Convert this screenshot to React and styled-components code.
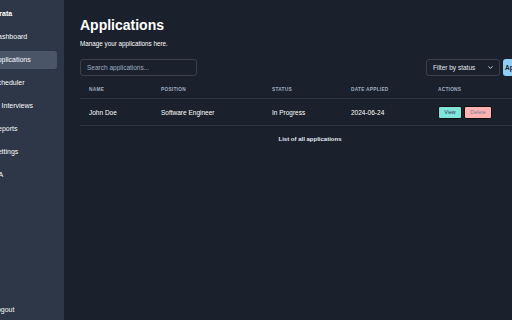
import React from 'react';
import styled, { createGlobalStyle } from 'styled-components';
import { ChevronDown } from 'lucide-react';

const GlobalStyle = createGlobalStyle`
  html, body {
    margin: 0;
    padding: 0;
    background: #1a202c;
    font-family: "Liberation Sans", Arial, sans-serif;
    color: #e2e8f0;
  }
`;

const Layout = styled.div`
  display: flex;
  width: 512px;
  height: 320px;
  overflow: hidden;
`;

const Sidebar = styled.aside`
  flex: 0 0 64px;
  display: flex;
  flex-direction: column;
  background: #2d3748;
  padding: 9px 7px 1px 0;
  box-sizing: border-box;
  overflow: hidden;
`;

const Brand = styled.div`
  margin-left: -20px;
  padding-left: 10px;
  height: 10px;
  line-height: 10px;
  font-size: 7px;
  font-weight: 700;
  color: #fff;
  white-space: nowrap;
  margin-bottom: 9px;
`;

const Nav = styled.nav`
  display: flex;
  flex-direction: column;
  gap: 5px;
`;

const NavItem = styled.div`
  margin-left: -20px;
  padding-left: 13px;
  height: 18px;
  line-height: 18px;
  font-size: 7px;
  color: #f7fafc;
  white-space: nowrap;
  border-radius: 3px;
  background: ${(p) => (p.$active ? '#4a5568' : 'transparent')};
`;

const Bottom = styled(NavItem)`
  margin-top: auto;
`;

const Main = styled.main`
  flex: 1;
  padding: 16px 0 0 16px;
  overflow: hidden;
`;

const Content = styled.div`
  width: 460px;
`;

const Title = styled.h1`
  margin: 0;
  font-size: 14px;
  line-height: 18px;
  font-weight: 700;
  color: #fff;
`;

const Subtitle = styled.p`
  margin: 5px 0 0;
  font-size: 6.3px;
  line-height: 10px;
  color: #fff;
`;

const Toolbar = styled.div`
  display: flex;
  justify-content: space-between;
  align-items: center;
  margin-top: 10px;
`;

const Search = styled.input`
  width: 117px;
  height: 17px;
  box-sizing: border-box;
  background: transparent;
  border: 1px solid rgba(255, 255, 255, 0.14);
  border-radius: 3px;
  padding: 0 6px;
  font-family: inherit;
  font-size: 6.5px;
  color: #e2e8f0;
  outline: none;
  &::placeholder {
    color: #a0aec0;
  }
`;

const Right = styled.div`
  display: flex;
  gap: 3px;
`;

const Select = styled.div`
  width: 74px;
  height: 17px;
  box-sizing: border-box;
  border: 1px solid rgba(255, 255, 255, 0.14);
  border-radius: 3px;
  display: flex;
  align-items: center;
  justify-content: space-between;
  padding: 0 5px 0 6px;
  font-size: 6.5px;
  color: #e2e8f0;
`;

const AddButton = styled.button`
  width: 37px;
  height: 17px;
  border: none;
  border-radius: 3px;
  background: #90cdf4;
  color: #1a202c;
  font-family: inherit;
  font-size: 6.5px;
  font-weight: 700;
  padding: 0 2px;
  white-space: nowrap;
  overflow: hidden;
  text-align: left;
`;

const Table = styled.table`
  width: 460px;
  margin-top: 6px;
  border-collapse: collapse;
  table-layout: fixed;
`;

const Th = styled.th`
  box-sizing: border-box;
  width: ${(p) => p.$w}px;
  height: 16px;
  padding: 0 0 0 9px;
  text-align: left;
  font-size: 4.8px;
  font-weight: 700;
  letter-spacing: 0.05em;
  text-transform: uppercase;
  color: #a0aec0;
  border-bottom: 1px solid #2d3748;
`;

const Td = styled.td`
  height: 25px;
  padding: 1px 0 0 9px;
  font-size: 6.5px;
  color: #fff;
  border-bottom: 1px solid #2d3748;
`;

const Caption = styled.caption`
  caption-side: bottom;
  padding-top: 9px;
  font-size: 6px;
  line-height: 8px;
  font-weight: 700;
  color: #e2e8f0;
`;

const Actions = styled.div`
  display: flex;
  gap: 2px;
`;

const ActionButton = styled.button`
  width: ${(p) => p.$w}px;
  height: 13px;
  padding: 0;
  border: 1px solid #111;
  border-radius: 2px;
  background: ${(p) => p.$bg};
  color: ${(p) => p.$color};
  font-family: inherit;
  font-size: 5.3px;
`;

const columns = [
  ['Name', 72],
  ['Position', 111],
  ['Status', 79],
  ['Date Applied', 87],
  ['Actions', 111],
];

const navItems = ['Dashboard', 'Applications', 'Scheduler', 'AI Interviews', 'Reports', 'Settings', 'QA'];

const App = () => (
  <>
    <GlobalStyle />
    <Layout>
      <Sidebar>
        <Brand>Curata</Brand>
        <Nav>
          {navItems.map((item) => (
            <NavItem key={item} $active={item === 'Applications'}>
              {item}
            </NavItem>
          ))}
        </Nav>
        <Bottom>Logout</Bottom>
      </Sidebar>
      <Main>
        <Content>
          <Title>Applications</Title>
          <Subtitle>Manage your applications here.</Subtitle>
          <Toolbar>
            <Search placeholder="Search applications..." />
            <Right>
              <Select>
                Filter by status
                <ChevronDown size={7} strokeWidth={3} />
              </Select>
              <AddButton>Apply</AddButton>
            </Right>
          </Toolbar>
          <Table>
            <Caption>List of all applications</Caption>
            <thead>
              <tr>
                {columns.map(([label, w]) => (
                  <Th key={label} $w={w}>
                    {label}
                  </Th>
                ))}
              </tr>
            </thead>
            <tbody>
              <tr>
                <Td>John Doe</Td>
                <Td>Software Engineer</Td>
                <Td>In Progress</Td>
                <Td>2024-06-24</Td>
                <Td>
                  <Actions>
                    <ActionButton $w={24} $bg="#81e6d9" $color="#2d3748">
                      View
                    </ActionButton>
                    <ActionButton $w={28} $bg="#feb2b2" $color="#718096">
                      Delete
                    </ActionButton>
                  </Actions>
                </Td>
              </tr>
            </tbody>
          </Table>
        </Content>
      </Main>
    </Layout>
  </>
);

export default App;
